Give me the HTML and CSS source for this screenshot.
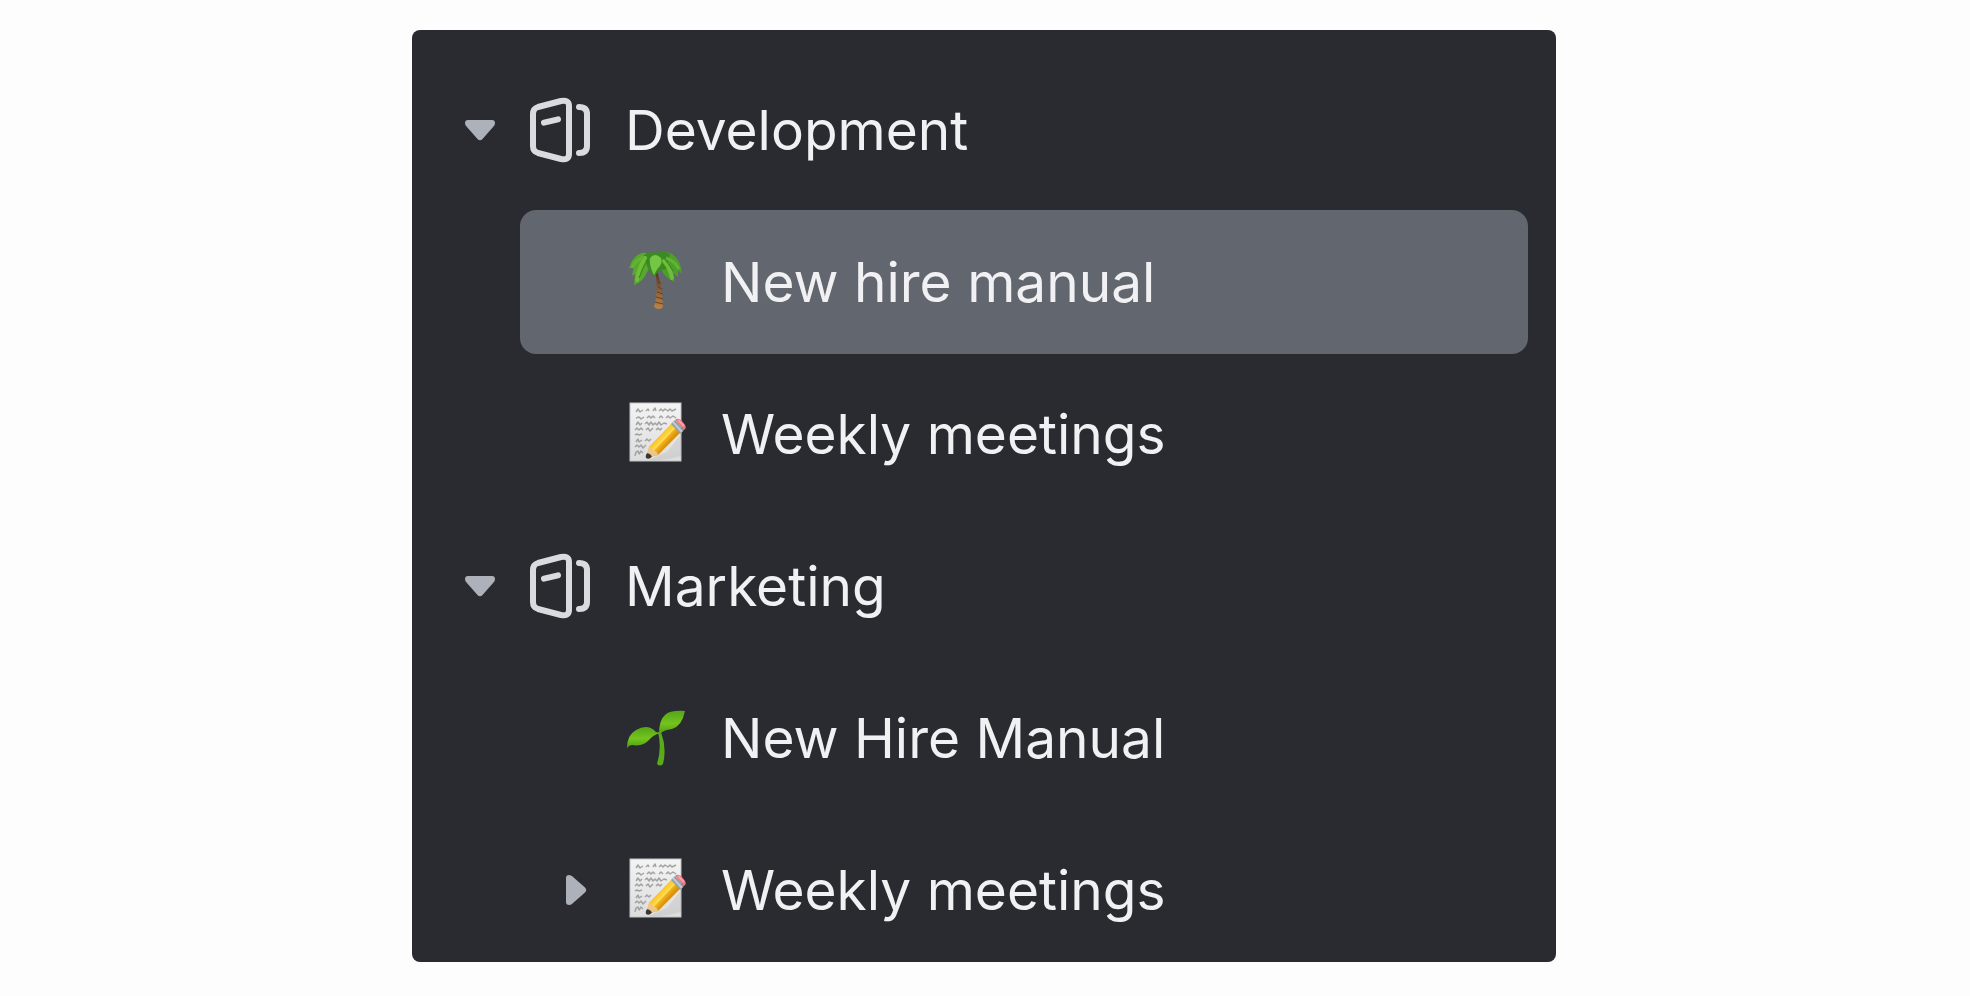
FILE: index.html
```
<!DOCTYPE html>
<html lang="en">
<head>
    <meta charset="UTF-8">
    <meta name="viewport" content="width=device-width, initial-scale=1.0">
    <title>Collections</title>
    <link rel="stylesheet" href="styles.css">
</head>
<body>
    <!-- Shared icons -->
    <svg class="sprite" aria-hidden="true">
        <defs>
            <linearGradient id="paper" x1="0" y1="0" x2="0" y2="1">
                <stop offset="0" stop-color="#f4f4f4"/>
                <stop offset="1" stop-color="#dcdcdc"/>
            </linearGradient>
            <linearGradient id="pencil" gradientUnits="userSpaceOnUse" x1="38" y1="36" x2="48" y2="45">
                <stop offset="0" stop-color="#f5ad12"/>
                <stop offset="0.4" stop-color="#ffd23a"/>
                <stop offset="1" stop-color="#dd9205"/>
            </linearGradient>
            <linearGradient id="leaf" x1="0" y1="0" x2="0" y2="1">
                <stop offset="0" stop-color="#54a519"/>
                <stop offset="0.55" stop-color="#74c41e"/>
                <stop offset="1" stop-color="#4f9d14"/>
            </linearGradient>
            <linearGradient id="trunk" x1="0" y1="0" x2="0" y2="1">
                <stop offset="0" stop-color="#4b2c18"/>
                <stop offset="0.5" stop-color="#8a5c34"/>
                <stop offset="1" stop-color="#b98549"/>
            </linearGradient>
        </defs>
        <symbol id="icon-caret" viewBox="0 0 48 48">
            <path d="M12 14H36Q39 14 39 17Q39 19 37.500 20.500L26.500 33Q24 35.500 21.500 33L10.500 20.500Q9 19 9 17Q9 14 12 14Z" fill="#adb1b9"/>
        </symbol>
        <symbol id="icon-collection" viewBox="0 0 72 72">
            <g fill="none" stroke="#dadbdf" stroke-width="6" stroke-linecap="round" stroke-linejoin="round">
                <path d="M9 20Q9 14.500 14 13L37 7Q45 5.500 45 12V60Q45 66.500 37 65L14 59Q9 57.500 9 52Z"/>
                <path d="M20 28.700L34 25.300"/>
                <path d="M55 13Q63 13 63 20V52Q63 59 55 59"/>
            </g>
        </symbol>
        <symbol id="icon-memo" viewBox="0 0 72 72">
            <rect x="10" y="5" width="51" height="58" fill="url(#paper)" stroke="#c4c4c4"/>
            <g fill="none" stroke="#a3a3a3" stroke-width="1.500" stroke-linejoin="round">
                <path d="M16 14l2-3 2 3 3-2M26 13l2-2 1 2M33 13l2-3 1 3M39 13l2-2 2 2 2-2 3 2 2-2 2 2 4-2"/>
                <path d="M16 20l3-1 2 2 3-2M27 20l2-2 2 2 2-2 2 2M39 20l2-2 2 2M46 20l2-2 2 2 3-2 3 2"/>
                <path d="M16 27l2-3 2 3 2-2M25 26l2-2 2 3 2-3 2 3 2-2 2 2 2-3 2 3 3-2 3 1"/>
                <path d="M15 32l2-2 2 2 2-2 2 2M26 32l2-2 2 3 3-3M36 32l2-2 2 2 2-2"/>
                <path d="M15 37l2-1 2 1 3-1"/>
                <path d="M16 44l2-3 1 3 3-2M25 43l2-2 2 2 2-2"/>
                <path d="M15 49l2-2 2 2 2-2 2 3 3-3"/>
                <path d="M15 58l1-4 2-1 1 3 2-3 2 2"/>
            </g>
            <path d="M29 62L47 54L61 36L61 58Q45 63 29 62Z" fill="#999" opacity=".2"/>
            <path d="M26 60L29 49L52 25L61 34L38 57Z" fill="url(#pencil)"/>
            <path d="M26 60L29 49Q32 49 33 52Q37 53 38 57Z" fill="#efc68a"/>
            <path d="M26 60Q25 57 27.500 55Q31 56 32 58.500Q29 62 26 60Z" fill="#393735"/>
            <path d="M33 52L55 29" stroke="#ffdc4f" stroke-width="2"/>
            <path d="M51 26L55 22L64 32L60 36Z" fill="#929fac"/>
            <path d="M53 24L62 34" stroke="#c1cad2" stroke-width="2"/>
            <path d="M55 22Q58 19 62 23L65 27Q67 30 64 32Z" fill="#e9767f"/>
            <path d="M58 22L64 28" stroke="#f7a4a8" stroke-width="2"/>
        </symbol>
    </svg>

    <nav class="sidebar" aria-label="Collections">
        <ul class="tree">
            <li>
                <div class="row">
                    <button class="toggle" type="button" aria-expanded="true" aria-label="Collapse Development">
                        <svg><use href="#icon-caret"/></svg>
                    </button>
                    <svg class="icon" aria-hidden="true"><use href="#icon-collection"/></svg>
                    <a class="title" href="#development">Development</a>
                </div>
                <ul class="tree children">
                    <li>
                        <div class="row active">
                            <span class="toggle"></span>
                            <svg class="icon" viewBox="0 0 72 72" aria-hidden="true">
                                <path d="M36 23Q42 36 43 61Q39 65 34 61Q39 42 35 24Z" fill="url(#trunk)"/>
                                <path d="M38 36l3 1M38 41l4 2M37 46l6 2M36 51l7 2M35 56l8 2" stroke="#65401f" stroke-width="1"/>
                                <path d="M36 21Q32 5 22 7Q12 10 9 23Q12 21 14 20L12 30L15 28L14 39Q23 36 27 26L31 20L34 27Z" fill="#56a92b"/>
                                <path d="M35 20Q39 3 50 7Q61 12 62 28L58 24L58 31L53 27Q55 32 54 36Q44 31 41 23Z" fill="#4c9f29"/>
                                <path d="M24 9Q30 4 36 7Q42 4 50 8L46 23L38 25Q35 32 32 29Q27 22 25 14Z" fill="#3b8a22"/>
                                <path d="M30 12Q35 6 41 12Q43 18 38 22Q36 25 34 29Q29 20 30 12Z" fill="#74c744"/>
                                <path d="M25 12Q19 21 17 34M44 15Q50 22 52 32" fill="none" stroke="#6fbe3a" stroke-width="4" stroke-linecap="round"/>
                                <path d="M24 11Q15 14 12 22M46 12Q55 15 59 23" fill="none" stroke="#64b234" stroke-width="3"/>
                                <path d="M28 14Q22 22 19 32M44 12Q50 20 53 25" fill="none" stroke="#37841f" stroke-width="1"/>
                            </svg>
                            <a class="title" href="#new-hire-manual" aria-current="page">New hire manual</a>
                        </div>
                    </li>
                    <li>
                        <div class="row">
                            <span class="toggle"></span>
                            <svg class="icon" aria-hidden="true"><use href="#icon-memo"/></svg>
                            <a class="title" href="#weekly-meetings">Weekly meetings</a>
                        </div>
                    </li>
                </ul>
            </li>
            <li>
                <div class="row">
                    <button class="toggle" type="button" aria-expanded="true" aria-label="Collapse Marketing">
                        <svg><use href="#icon-caret"/></svg>
                    </button>
                    <svg class="icon" aria-hidden="true"><use href="#icon-collection"/></svg>
                    <a class="title" href="#marketing">Marketing</a>
                </div>
                <ul class="tree children">
                    <li>
                        <div class="row">
                            <span class="toggle"></span>
                            <svg class="icon" viewBox="0 0 72 72" aria-hidden="true">
                                <path d="M38 30L41 30Q47 46 43 62Q40 65 37 62Q42 46 38 30Z" fill="#5aaa1a"/>
                                <path d="M39 32Q39 18 45 13Q50 8 65 9Q62 24 52 27Q43 28 40 32Z" fill="url(#leaf)"/>
                                <path d="M7 46Q7 33 16 28Q28 21 36 30L40 31Q33 33 29 38Q23 45 12 43Q9 43 7 46Z" fill="url(#leaf)"/>
                            </svg>
                            <a class="title" href="#marketing-new-hire-manual">New Hire Manual</a>
                        </div>
                    </li>
                    <li>
                        <div class="row">
                            <button class="toggle" type="button" aria-expanded="false" aria-label="Expand Weekly meetings">
                                <svg><use href="#icon-caret"/></svg>
                            </button>
                            <svg class="icon" aria-hidden="true"><use href="#icon-memo"/></svg>
                            <a class="title" href="#marketing-weekly-meetings">Weekly meetings</a>
                        </div>
                    </li>
                </ul>
            </li>
        </ul>
    </nav>
</body>
</html>
```
FILE: styles.css
```
body {
    margin: 0;
    padding: 30px 22px 30px 20px;
    background: #fdfdfd;
    font-family: Inter, "Liberation Sans", sans-serif;
}
.sprite {
    position: absolute;
    width: 0;
    height: 0;
}
.sidebar {
    box-sizing: border-box;
    max-width: 1144px;
    margin: 0 auto;
    padding: 28px 28px 0 12px;
    background: #2a2b30;
    border-radius: 8px;
}
.tree {
    display: flex;
    flex-direction: column;
    gap: 8px;
    margin: 0;
    padding: 0;
    list-style: none;
}
.children {
    margin-top: 8px;
    padding-left: 96px;
}
.row {
    display: flex;
    align-items: center;
    box-sizing: border-box;
    min-height: 144px;
    padding: 0 32px;
    border-radius: 16px;
}
.row.active {
    background: #62666e;
}
.toggle {
    flex: none;
    width: 48px;
    height: 48px;
    margin-right: 20px;
    padding: 0;
    border: none;
    background: none;
    cursor: pointer;
}
.toggle svg {
    display: block;
    width: 48px;
    height: 48px;
}
.toggle[aria-expanded="false"] svg {
    transform: rotate(-90deg);
}
span.toggle {
    cursor: default;
}
.icon {
    flex: none;
    width: 72px;
    height: 72px;
    margin-right: 29px;
}
.title {
    color: #f1f1f4;
    font-size: 55px;
    font-weight: 400;
    line-height: 72px;
    text-decoration: none;
}
```
